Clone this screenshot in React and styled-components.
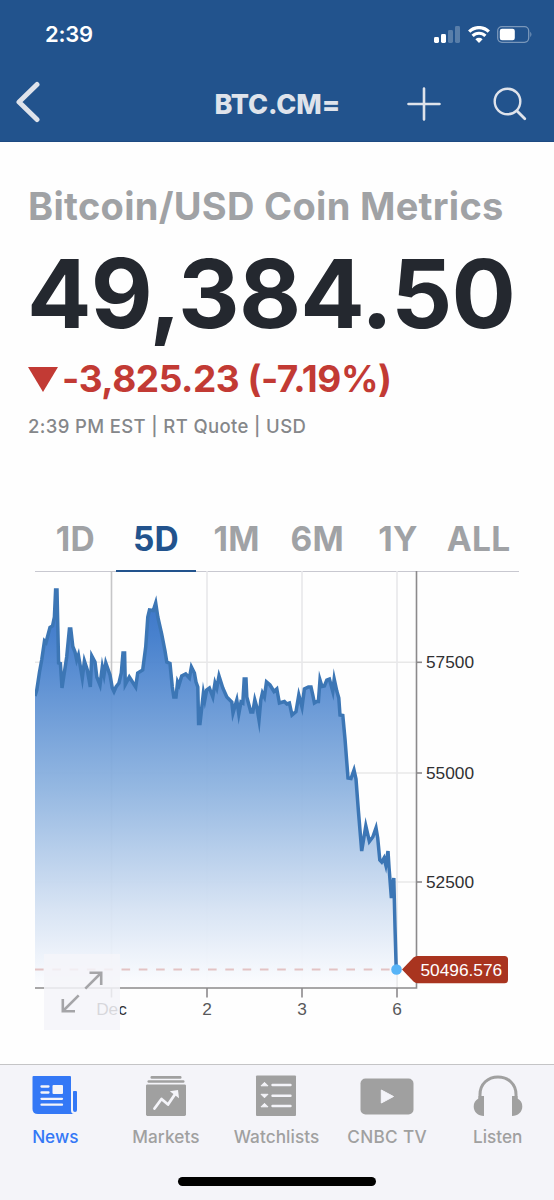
import React from 'react'
import styled, { createGlobalStyle } from 'styled-components'

// data
const ranges = ['1D', '5D', '1M', '6M', '1Y', 'ALL']

const priceTicks = [
  { label: '57500', y: 92.3 },
  { label: '55000', y: 203 },
  { label: '52500', y: 312 },
]

const dayTicks = [
  { label: 'Dec', x: 76.5 },
  { label: '2', x: 172 },
  { label: '3', x: 267 },
  { label: '6', x: 362 },
]

const points = [
  [0, 126], [1.8, 120], [4.5, 102], [6.7, 90], [9.5, 71], [11, 72.5],
  [15, 57.5], [17.5, 56], [19.4, 47], [20.6, 20], [22, 20], [22.8, 57],
  [23.6, 93], [25.4, 93.5], [27, 118], [31.7, 87], [34.4, 59], [35.8, 59],
  [37.8, 76.5], [40, 82], [41.7, 90], [43.4, 85], [47.3, 108], [49.4, 91],
  [52.3, 100], [55.3, 117], [56.8, 86], [60, 92], [61.8, 107], [65, 115],
  [67.3, 97], [69, 105], [70.8, 93], [75, 105], [77.3, 118], [79, 121.5],
  [81, 117], [84, 113], [86.3, 103], [88, 83], [89.6, 83],
  [90.3, 114.5], [94.3, 107], [100.7, 117], [102.7, 103], [107.7, 100],
  [110.7, 77], [112.8, 47], [114.5, 40], [118.3, 40.5], [120.7, 33],
  [122.8, 47], [126.7, 64], [130, 81], [131.8, 92], [135, 93.5],
  [137.3, 117], [138.8, 127], [141, 127], [142.6, 112], [144, 115],
  [146.7, 106], [150.7, 104], [154.4, 108], [156.4, 97], [159.4, 103],
  [161, 112], [162.8, 117], [163.6, 153.5], [165, 153.5], [168.4, 123],
  [169.8, 130], [171.7, 120], [174.4, 118], [177.8, 127], [180, 113],
  [181.8, 118], [184, 106], [187.8, 118], [191.8, 127], [196.8, 132],
  [198, 143], [201.8, 130], [203.8, 144], [206, 132], [207.8, 133],
  [209.2, 109], [211, 109], [211.8, 127], [215.8, 142], [217.8, 142],
  [219.8, 130], [222, 138], [224, 150], [225.8, 130], [227.4, 123],
  [229.4, 127], [231.5, 112], [235, 115], [239, 121.5], [241.8, 119],
  [244.4, 133], [249.4, 131.5], [251.8, 134], [254.4, 133], [257, 145],
  [261, 141.5], [263.8, 125], [267, 137], [269.4, 119], [273.4, 117],
  [276, 117], [277.8, 125], [279.4, 133], [281.8, 131.5], [283.4, 131.5],
  [285, 110], [287, 116.5], [289.4, 116], [291.8, 110], [294.4, 109],
  [297.8, 121.5], [299.2, 109], [301.8, 121], [303.8, 128], [305, 145],
  [307.8, 145.5], [310, 169], [313, 208], [316, 208.5], [319, 200],
  [321, 209], [323.4, 241], [326.7, 281], [330.8, 256], [334.4, 271.5],
  [337.8, 267], [341, 258], [342.7, 268], [344.8, 290], [346.7, 292],
  [349, 288], [350.8, 295], [353, 281], [354, 297], [356.4, 328],
  [358.8, 308], [360, 357], [361.2, 399],
]

const linePath = 'M' + points.map((p) => p.join(' ')).join(' L')
const areaPath = `${linePath} L361.2 418 L0 418 Z`

const BackIcon = () => (
  <svg width="26" height="42" viewBox="0 0 26 42" fill="none">
    <path
      d="M22 3.5 L4 21 L22 38.5"
      stroke="#dfe3eb"
      strokeWidth="5"
      strokeLinecap="round"
      strokeLinejoin="round"
    />
  </svg>
)

const PlusIcon = () => (
  <svg width="34" height="34" viewBox="0 0 34 34" fill="none">
    <path
      d="M17 1.5 V32.5 M1.5 17 H32.5"
      stroke="#dfe3eb"
      strokeWidth="2.6"
      strokeLinecap="round"
    />
  </svg>
)

const SearchIcon = () => (
  <svg width="34" height="34" viewBox="0 0 34 34" fill="none">
    <circle cx="14.5" cy="14.5" r="12.8" stroke="#dfe3eb" strokeWidth="2.4" />
    <path
      d="M23.8 23.8 L31.8 31.8"
      stroke="#dfe3eb"
      strokeWidth="2.8"
      strokeLinecap="round"
    />
  </svg>
)

const SignalIcon = () => (
  <svg width="26" height="17" viewBox="0 0 26 17" fill="#fff">
    <rect x="0" y="11" width="5" height="6" rx="1.4" />
    <rect x="7" y="8" width="5" height="9" rx="1.4" />
    <rect x="14" y="4" width="5" height="13" rx="1.4" opacity="0.25" />
    <rect x="21" y="0" width="5" height="17" rx="1.4" opacity="0.25" />
  </svg>
)

const WifiIcon = () => (
  <svg width="22" height="17" viewBox="0 0 22 17" fill="none">
    <path d="M1.2 5.6 A14 14 0 0 1 20.8 5.6" stroke="#fff" strokeWidth="3.3" />
    <path d="M4.6 9.9 A9 9 0 0 1 17.4 9.9" stroke="#fff" strokeWidth="3.1" />
    <path d="M11 17 L7.4 13.3 A5.2 5.2 0 0 1 14.6 13.3 Z" fill="#fff" />
  </svg>
)

const BatteryIcon = () => (
  <svg width="36" height="17" viewBox="0 0 36 17" fill="none">
    <rect
      x="0.7"
      y="0.7"
      width="31"
      height="15.6"
      rx="4.2"
      stroke="#fff"
      strokeOpacity="0.4"
      strokeWidth="1.3"
    />
    <rect x="2.8" y="2.8" width="15" height="11.4" rx="2.2" fill="#fff" />
    <path d="M33.4 5.8 Q35.4 8.5 33.4 11.2 Z" fill="#fff" opacity="0.45" />
  </svg>
)

const ExpandIcon = () => (
  <svg width="42" height="42" viewBox="0 0 42 42" fill="none">
    <path
      d="M24.3 17.7 L40 2 M28.5 1.8 H40.2 V14 M17.7 24.3 L2 40 M1.8 28 V40.2 H14"
      stroke="#a5a5a8"
      strokeWidth="2.6"
    />
  </svg>
)

const NewsIcon = () => (
  <svg width="46" height="42" viewBox="0 0 46 42">
    <path
      d="M1.5 1 H38 Q39 1 39 2 V35 Q39 39 42 39 H6 Q0.5 39 0.5 34 V2 Q0.5 1 1.5 1 Z"
      fill="#3478f6"
    />
    <path
      d="M41.5 16 H44 Q45 16 45 17 V35 Q45 37 43 37 Q41 37 41 35 V16.5 Z"
      fill="#3478f6"
    />
    <rect x="20.5" y="10" width="10.5" height="9" rx="1" fill="#f4f4f9" />
    <path
      d="M9.5 11.5 H16.5 M9.5 17.5 H16.5 M9.5 23.8 H30 M9.5 29.7 H30"
      stroke="#f4f4f9"
      strokeWidth="2.3"
      strokeLinecap="round"
    />
  </svg>
)

const MarketsIcon = () => (
  <svg width="42" height="42" viewBox="0 0 42 42">
    <rect x="5.5" y="1" width="31" height="2.8" rx="1.2" fill="#a0a0a0" />
    <rect x="2.5" y="5.2" width="37" height="2.6" rx="1.2" fill="#a0a0a0" />
    <rect x="1" y="9.4" width="40" height="31.6" rx="1.4" fill="#a0a0a0" />
    <path
      d="M9.5 33.5 L16.5 24 L23 29.5 L30.5 18.5"
      stroke="#f4f4f9"
      strokeWidth="2.8"
      strokeLinecap="round"
      strokeLinejoin="round"
      fill="none"
    />
    <path d="M24.8 16.2 L33 15 L34 23.3 Z" fill="#f4f4f9" />
  </svg>
)

const WatchlistsIcon = () => (
  <svg width="42" height="42" viewBox="0 0 42 42">
    <rect x="1" y="0.5" width="40" height="40.5" rx="1" fill="#a0a0a0" />
    <path
      d="M6 10.8 L9.5 7.3 L13 10.8 Z M6 19.3 L9.5 22.8 L13 19.3 Z M6 31.8 L9.5 28.3 L13 31.8 Z"
      fill="#f4f4f9"
      stroke="#f4f4f9"
      strokeLinejoin="round"
    />
    <path
      d="M17.5 10 H35.5 M17.5 20.8 H35.5 M17.5 31 H35.5"
      stroke="#f4f4f9"
      strokeWidth="2.4"
      strokeLinecap="round"
    />
  </svg>
)

const TvIcon = () => (
  <svg width="54" height="42" viewBox="0 0 54 42">
    <rect x="0.5" y="3.5" width="53" height="36" rx="5" fill="#a0a0a0" />
    <path
      d="M21.3 15 L33.5 21.5 L21.3 28 Z"
      fill="#f4f4f9"
      stroke="#f4f4f9"
      strokeLinejoin="round"
    />
  </svg>
)

const ListenIcon = () => (
  <svg width="50" height="42" viewBox="0 0 50 42">
    <path
      d="M7 24 V19.5 C7 9 15 1.9 25 1.9 S43 9 43 19.5 V24"
      stroke="#a0a0a0"
      strokeWidth="3"
      fill="none"
    />
    <path d="M5.5 21 H11 V41 C5 41 0.7 37 0.7 31.5 Q0.7 26 5.5 23.5 Z" fill="#a0a0a0" />
    <path d="M44.5 21 H39 V41 C45 41 49.3 37 49.3 31.5 Q49.3 26 44.5 23.5 Z" fill="#a0a0a0" />
  </svg>
)

const navItems = [
  { label: 'News', icon: NewsIcon, active: true },
  { label: 'Markets', icon: MarketsIcon, spacing: '0.1px' },
  { label: 'Watchlists', icon: WatchlistsIcon, spacing: '0.08px' },
  { label: 'CNBC TV', icon: TvIcon, spacing: '0.3px' },
  { label: 'Listen', icon: ListenIcon },
]

const PriceChart = () => (
  <ChartSvg width="484" height="460" viewBox="0 0 484 460">
    <defs>
      <linearGradient id="area" gradientUnits="userSpaceOnUse" x1="0" y1="19" x2="0" y2="418">
        <stop offset="0" stopColor="#2e6cc4" />
        <stop offset="0.12" stopColor="#3f7bcb" />
        <stop offset="0.5" stopColor="#8fb4e0" />
        <stop offset="0.8" stopColor="#d5e2f3" />
        <stop offset="1" stopColor="#fdfdff" />
      </linearGradient>
    </defs>
    {/* grid */}
    {priceTicks.map((tick) => (
      <path key={tick.label} d={`M0 ${tick.y} H381`} stroke="#e8e8e8" strokeWidth="1.5" />
    ))}
    {dayTicks.map((tick) => (
      <path
        key={tick.label}
        d={`M${tick.x} 1 V418`}
        stroke={tick.label === 'Dec' ? '#c6c6c8' : '#e8e8ea'}
        strokeWidth="1.6"
      />
    ))}
    {/* price area */}
    <path d={areaPath} fill="url(#area)" fillOpacity="0.95" />
    <path d="M0 399.5 H361" stroke="#e3c3c4" strokeWidth="1.8" strokeDasharray="8.6 8.7" />
    <path d={linePath} fill="none" stroke="#3c76b5" strokeWidth="3.5" strokeMiterlimit="8" />
    {/* axes */}
    <path d="M0 418 H381.5 V1" fill="none" stroke="#8c8a8c" strokeWidth="1.6" />
    {priceTicks.map((tick) => (
      <g key={tick.label}>
        <path d={`M381 ${tick.y} H387`} stroke="#8c8a8c" strokeWidth="1.6" />
        <AxisText x="391" y={tick.y + 6}>
          {tick.label}
        </AxisText>
      </g>
    ))}
    {dayTicks.map((tick) => (
      <g key={tick.label}>
        <path d={`M${tick.x} 418 V427.5`} stroke="#8c8a8c" strokeWidth="1.6" />
        <AxisText x={tick.x} y="445" textAnchor="middle" $light={tick.label !== 'Dec'}>
          {tick.label}
        </AxisText>
      </g>
    ))}
    {/* last price */}
    <circle cx="361.5" cy="399.5" r="5.3" fill="#57b4f7" />
    <path
      d="M367 399.5 L378.5 387.6 Q380.3 386 382.5 386 H469.5 Q473 386 473 389.5 V409.8 Q473 413.3 469.5 413.3 H382.5 Q380.3 413.3 378.5 411.6 Z"
      fill="#a9341f"
    />
    <FlagText x="385.5" y="406">
      50496.576
    </FlagText>
  </ChartSvg>
)

const App = () => {
  return (
    <>
      <GlobalStyle />
      <Screen>
        <Header>
          <StatusBar>
            <Clock>2:39</Clock>
            <StatusIcons>
              <SignalIcon />
              <WifiIcon />
              <BatteryIcon />
            </StatusIcons>
          </StatusBar>
          <TitleBar>
            <BackIcon />
            <Symbol>BTC.CM=</Symbol>
            <Actions>
              <PlusIcon />
              <SearchIcon />
            </Actions>
          </TitleBar>
        </Header>
        <Quote>
          <Name>Bitcoin/USD Coin Metrics</Name>
          <Price>49,384.50</Price>
          <Change>
            <svg width="30" height="25" viewBox="0 0 30 25">
              <path d="M0 0 H30 L15 25 Z" fill="#c23a34" />
            </svg>
            <span>-3,825.23 (-7.19%)</span>
          </Change>
          <Meta>2:39 PM EST | RT Quote | USD</Meta>
        </Quote>
        <ChartPanel>
          <Ranges>
            {ranges.map((range) => (
              <Range key={range} $active={range === '5D'}>
                {range}
              </Range>
            ))}
          </Ranges>
          <PriceChart />
          <Expand>
            <ExpandIcon />
          </Expand>
        </ChartPanel>
        <BottomBar>
          <Nav>
            {navItems.map(({ label, icon: Icon, active, spacing }) => (
              <NavItem key={label} $active={active} $spacing={spacing}>
                <Icon />
                <span>{label}</span>
              </NavItem>
            ))}
          </Nav>
          <HomeIndicator />
        </BottomBar>
      </Screen>
    </>
  )
}

const GlobalStyle = createGlobalStyle`
  * {
    box-sizing: border-box;
  }
  body {
    margin: 0;
    background: #fff;
    font-family: Inter, 'Liberation Sans', sans-serif;
  }
  svg {
    display: block;
    flex-shrink: 0;
  }
`
const Screen = styled.div`
  display: flex;
  flex-direction: column;
  width: 554px;
  height: 1200px;
  overflow: hidden;
  background: #fefefe;
`
const Header = styled.header`
  height: 142px;
  background: #22538d;
  border-bottom: 1px solid #1d4a82;
`
const StatusBar = styled.div`
  display: flex;
  align-items: center;
  justify-content: space-between;
  height: 68px;
  padding: 0 21px 0 45px;
  color: #fff;
`
const Clock = styled.span`
  font-size: 22px;
  font-weight: 600;
  letter-spacing: -0.2px;
`
const StatusIcons = styled.div`
  display: flex;
  gap: 7.5px;
`
const TitleBar = styled.div`
  display: grid;
  grid-template-columns: 199.5px auto 1fr;
  align-items: center;
  height: 68px;
  padding: 0 27px 0 15px;
`
const Symbol = styled.h1`
  margin: 5px 0 0;
  color: #dfe3eb;
  font-size: 27px;
  font-weight: 800;
  letter-spacing: -0.1px;
`
const Actions = styled.div`
  display: flex;
  justify-content: flex-end;
  gap: 52px;
  padding-top: 3px;
`
const Quote = styled.section`
  display: flex;
  flex-direction: column;
  height: 366px;
  padding: 42px 28px 0;
  white-space: nowrap;
`
const Name = styled.h2`
  margin: 0;
  color: #a0a2a5;
  font-size: 38px;
  font-weight: 700;
  letter-spacing: 0.3px;
  line-height: 44px;
`
const Price = styled.div`
  margin: 19px 0 0 -1px;
  color: #24282f;
  font-size: 95.5px;
  font-weight: 700;
  letter-spacing: -0.8px;
  line-height: 92px;
`
const Change = styled.div`
  display: flex;
  align-items: center;
  gap: 4px;
  margin-top: 18px;
  color: #c23a34;
  font-size: 37px;
  font-weight: 700;
  letter-spacing: -0.45px;
  line-height: 44px;
`
const Meta = styled.div`
  margin-top: 12px;
  color: #85878a;
  font-size: 18.5px;
  font-weight: 500;
  letter-spacing: 0.36px;
  line-height: 26px;
`
const ChartPanel = styled.section`
  position: relative;
  flex: 1;
  padding: 0 35px;
`
const Ranges = styled.div`
  display: grid;
  grid-template-columns: repeat(6, 1fr);
  height: 64px;
  border-bottom: 1.5px solid #c8c8d0;
`
const Range = styled.div`
  height: 64px;
  border-bottom: 2px solid ${(props) => (props.$active ? '#22538d' : 'transparent')};
  color: ${(props) => (props.$active ? '#22538d' : '#a0a2a5')};
  font-size: 33.5px;
  font-weight: 700;
  letter-spacing: 0.3px;
  line-height: 62px;
  text-align: center;
`
const ChartSvg = styled.svg`
  margin-top: -2px;
`
const AxisText = styled.text`
  fill: ${(props) => (props.$light ? '#58585a' : '#303032')};
  font-family: 'Liberation Sans', Arial, sans-serif;
  font-size: 17.3px;
`
const FlagText = styled.text`
  fill: #fff;
  font-family: 'Liberation Sans', Arial, sans-serif;
  font-size: 17.3px;
`
const Expand = styled.div`
  position: absolute;
  left: 43.5px;
  top: 445.5px;
  display: flex;
  align-items: center;
  justify-content: center;
  width: 76px;
  height: 76px;
  background: rgba(244, 244, 249, 0.85);
`
const BottomBar = styled.footer`
  display: flex;
  flex-direction: column;
  align-items: center;
  height: 136px;
  background: #f4f4f9;
  border-top: 1.5px solid #c4c4c6;
`
const Nav = styled.nav`
  display: grid;
  grid-template-columns: repeat(5, 1fr);
  width: 100%;
  height: 112px;
  padding: 10px 1px 0 0;
`
const NavItem = styled.div`
  display: flex;
  flex-direction: column;
  align-items: center;
  gap: 8px;
  color: ${(props) => (props.$active ? '#3478f6' : '#a0a0a0')};
  font-size: 17.2px;
  font-weight: 500;
  letter-spacing: ${(props) => props.$spacing || '0'};
  line-height: 24px;
`
const HomeIndicator = styled.div`
  width: 198px;
  height: 9px;
  border-radius: 5px;
  background: #000;
`

export default App
